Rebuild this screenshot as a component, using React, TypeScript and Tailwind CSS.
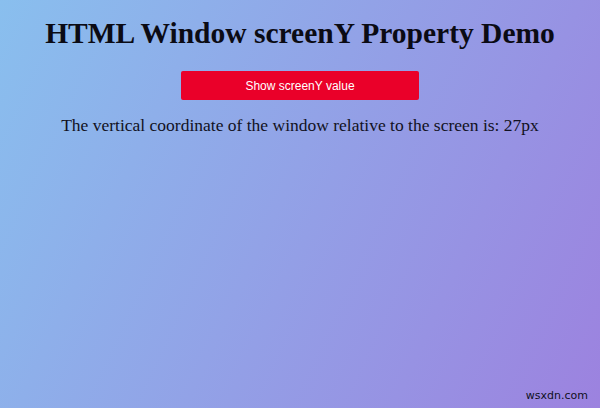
import React from "react";

export default function App() {
  return (
    <div className="relative w-[600px] h-[408px] overflow-hidden bg-[linear-gradient(115deg,#89bfee_0%,#9c82df_100%)] flex flex-col items-center text-center">
      <h1 className="mt-[19px] text-[29.5px] leading-none font-bold text-[#0b0b14] font-['Liberation_Serif','Times_New_Roman',serif] whitespace-nowrap">
        HTML Window screenY Property Demo
      </h1>
      <button className="mt-[22.5px] w-[238px] h-[29px] bg-[#ea0029] text-white text-[12px] font-['Liberation_Sans',Arial,sans-serif] rounded-[2px]">
        Show screenY value
      </button>
      <p className="mt-[17px] text-[17.5px] leading-none text-[#111122] font-['Liberation_Serif','Times_New_Roman',serif] whitespace-nowrap">
        The vertical coordinate of the window relative to the screen is: 27px
      </p>
      <div className="absolute right-[12px] bottom-[4px] text-[11px] text-[#10101c] font-['DejaVu_Sans','Liberation_Sans',sans-serif]">
        wsxdn.com
      </div>
    </div>
  );
}
